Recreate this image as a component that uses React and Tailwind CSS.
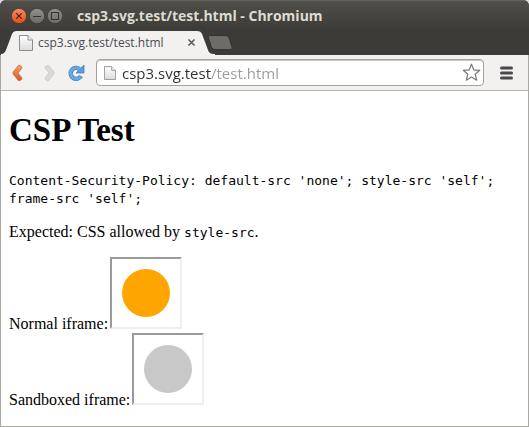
import { useState } from "react";

function PageIcon({ className }) {
  return (
    <svg viewBox="0 0 14 16" className={className} aria-hidden="true">
      <defs>
        <linearGradient id="sheet" x1="0" y1="0" x2="0" y2="1">
          <stop offset="0" stopColor="#ffffff" />
          <stop offset="1" stopColor="#dcdcdc" />
        </linearGradient>
      </defs>
      <path d="M.5.5h8.5l4.500 4.500v10.500H.5z" fill="url(#sheet)" stroke="#8c8c8c" />
      <path d="M9 .5V5h4.500" fill="#f4f4f4" stroke="#8c8c8c" />
    </svg>
  );
}

function WindowButton({ label, close, children }) {
  const id = close ? "wb-close" : "wb-plain";
  return (
    <button type="button" aria-label={label} className="size-4">
      <svg viewBox="0 0 16 16" className="size-4">
        <defs>
          <linearGradient id={id} x1="0" y1="0" x2="0" y2="1">
            <stop offset="0" stopColor={close ? "#f58a66" : "#93928c"} />
            <stop offset="1" stopColor={close ? "#e2500f" : "#6b6a64"} />
          </linearGradient>
        </defs>
        <circle cx="8" cy="8" r="7.600" fill={`url(#${id})`} stroke="#3a3935" strokeWidth=".7" />
        <g fill="none" stroke={close ? "#45200f" : "#33322e"} strokeWidth="1.100">
          {children}
        </g>
      </svg>
    </button>
  );
}

function TitleBar() {
  return (
    <header className="flex h-[29px] items-center gap-[14px] pl-[11px]">
      <div className="flex gap-[2px]">
        <WindowButton label="Close" close>
          <path d="M5.200 5.200l5.600 5.600M10.800 5.200l-5.600 5.600" />
        </WindowButton>
        <WindowButton label="Minimize">
          <path d="M4 8.500h8" />
        </WindowButton>
        <WindowButton label="Maximize">
          <path d="M4.500 4.500h7v7h-7z" />
        </WindowButton>
      </div>
      <div className="text-[14px] leading-5 font-bold whitespace-nowrap text-[#dfdbd2]">
        csp3.svg.test/test.html - Chromium
      </div>
    </header>
  );
}

function TabStrip() {
  return (
    <div className="flex h-[25px] items-center">
      <div className="relative flex h-[25px] w-[206px] items-center pl-[18px]">
        <svg viewBox="0 0 214 25" className="absolute top-0 left-0 h-[25px] w-[214px]" aria-hidden="true">
          <path
            d="M0 25v-1c3 0 4-2 5-4L11 4c1-2 2-3 5-3h180c3 0 4 1 5 3l6 16c1 3 3 4 6 4h1v1z"
            fill="#f2f1f0"
          />
        </svg>
        <PageIcon className="relative h-4 w-[14px]" />
        <span className="relative ml-[5px] w-[149px] text-[12px] leading-4 whitespace-nowrap text-[#4b4b4f]">
          csp3.svg.test/test.html
        </span>
        <button type="button" aria-label="Close tab" className="relative size-[9px] shrink-0">
          <svg viewBox="0 0 9 9" className="size-[9px]">
            <path d="M1.500 1.500l6 6M7.500 1.500l-6 6" stroke="#5a5a5a" strokeWidth="1.600" />
          </svg>
        </button>
      </div>
      <button type="button" aria-label="New tab" className="h-[15px] w-[26px]">
        <svg viewBox="0 0 26 15" className="h-[15px] w-[26px]">
          <path
            d="M3 .5h14.500c2.500 0 4 .800 4.800 3l2.700 8.500c.500 1.700 0 2.500-1.500 2.500H9c-2.500 0-4-.800-4.800-3L1.500 3C1 1.200 1.500.5 3 .5z"
            fill="#6d6c67"
            stroke="#34332f"
          />
        </svg>
      </button>
    </div>
  );
}

function Toolbar() {
  const [address, setAddress] = useState("csp3.svg.test/test.html");
  return (
    <nav className="flex h-9 items-center border-b border-[#b6b4b1] bg-[#f2f1f0] pl-2">
      <button type="button" aria-label="Back" className="size-[18px]">
        <svg viewBox="0 0 18 18" className="size-[18px]">
          <defs>
            <linearGradient id="back" x1="0" y1="0" x2="0" y2="1">
              <stop offset="0" stopColor="#f0a672" />
              <stop offset="1" stopColor="#e0511c" />
            </linearGradient>
          </defs>
          <path
            d="M11 1.500L9.500 1.300 4.200 8q-.6 1 0 2l5.300 6.700 1.500-.2 1.800-1.300v-1.400L9 9l3.800-4.800V2.800z"
            fill="url(#back)"
            stroke="#cf6a3a"
            strokeWidth=".8"
            strokeLinejoin="round"
          />
        </svg>
      </button>
      <button type="button" aria-label="Forward" className="ml-3 size-[18px]">
        <svg viewBox="0 0 18 18" className="size-[18px]">
          <path
            d="M8 1.500l1.500-.2L14.800 8q.6 1 0 2l-5.300 6.700-1.500-.2-1.800-1.300v-1.400L10 9 6.200 4.200V2.800z"
            fill="#dbd9d7"
            stroke="#c9c7c5"
            strokeWidth=".8"
            strokeLinejoin="round"
          />
        </svg>
      </button>
      <button type="button" aria-label="Reload" className="ml-[10px] size-[18px]">
        <svg viewBox="0 0 18 18" className="size-[18px]">
          <path
            d="M12.500 5A5.500 5.500 0 1 0 14 12"
            fill="none"
            stroke="#4583bf"
            strokeWidth="4.400"
          />
          <path d="M17 1v8H9z" fill="#5b9bd9" stroke="#4583bf" strokeWidth=".8" strokeLinejoin="round" />
          <path
            d="M13 5.300A5.500 5.500 0 1 0 13.700 12.300"
            fill="none"
            stroke="#6aa8e2"
            strokeWidth="3"
          />
        </svg>
      </button>
      <div className="ml-[11px] flex h-[27px] min-w-0 flex-1 items-center rounded-[4px] border border-[#a5a29e] bg-white pr-[2px] pl-[7px] shadow-[inset_0_1px_0_#c9c7c4]">
        <PageIcon className="h-4 w-3 shrink-0" />
        <input
          aria-label="Address"
          value={address}
          onChange={(event) => setAddress(event.target.value)}
          className="ml-[6px] h-[22px] min-w-0 flex-1 bg-[linear-gradient(90deg,#303030_89px,#9a9a9a_89px)] bg-clip-text text-[15px] leading-5 text-transparent caret-black outline-none"
        />
        <button type="button" aria-label="Bookmark this page" className="size-[19px] shrink-0">
          <svg viewBox="0 0 19 19" className="size-[19px]">
            <path
              d="M9.500 1.200l2.300 5.600 6 .500-4.600 3.900 1.500 6-5.200-3.200-5.200 3.200 1.500-6L1.200 7.300l6-.500z"
              fill="#fff"
              stroke="#777"
              strokeWidth="1.200"
              strokeLinejoin="round"
            />
          </svg>
        </button>
      </div>
      <button type="button" aria-label="Menu" className="mr-[15px] ml-4 h-[14px] w-[13px]">
        <svg viewBox="0 0 13 14" className="h-[14px] w-[13px]">
          <path d="M1.500 2h10M1.500 7h10M1.500 12h10" stroke="#4a474b" strokeWidth="3" strokeLinecap="round" />
        </svg>
      </button>
    </nav>
  );
}

function FrameRow({ label, color }) {
  return (
    <div className="flex items-baseline gap-[2px]">
      <span>{label}</span>
      <div className="size-[72px] border-2 border-t-[#9a9a9a] border-r-[#eeeeee] border-b-[#eeeeee] border-l-[#9a9a9a] p-[10px]">
        <div className={`size-12 rounded-full ${color}`} />
      </div>
    </div>
  );
}

function Document() {
  return (
    <main className="flex-1 bg-white px-2 pt-[21px] font-['Liberation_Serif',serif] text-[16px] leading-[18px] text-black">
      <h1 className="text-[33px] leading-[37px] font-bold">CSP Test</h1>
      <p className="mt-[23px] font-['DejaVu_Sans_Mono',monospace] text-[13px]">
        Content-Security-Policy: default-src 'none'; style-src 'self'; frame-src 'self';
      </p>
      <p className="mt-[15px]">
        Expected: CSS allowed by{" "}
        <code className="font-['DejaVu_Sans_Mono',monospace] text-[13px]">style-src</code>.
      </p>
      <div className="mt-[15px]">
        <FrameRow label="Normal iframe:" color="bg-[#ffa500]" />
        <FrameRow label="Sandboxed iframe:" color="bg-[#c8c8c8]" />
      </div>
    </main>
  );
}

export default function App() {
  return (
    <div className="min-h-screen bg-[#dcd8d8]">
      <div className="flex min-h-screen flex-col overflow-hidden rounded-t-[6px] bg-[#3c3b37] font-['Open_Sans','Noto_Sans',sans-serif]">
        <div className="border-t border-[#64635d] bg-linear-to-b from-[#504f49] to-[#3c3b37] to-55%">
          <TitleBar />
          <div className="border-x border-[#3c3b37]">
            <TabStrip />
          </div>
        </div>
        <div className="flex flex-1 flex-col border-x border-b border-[#aaa8a3]">
          <Toolbar />
          <Document />
        </div>
      </div>
    </div>
  );
}
